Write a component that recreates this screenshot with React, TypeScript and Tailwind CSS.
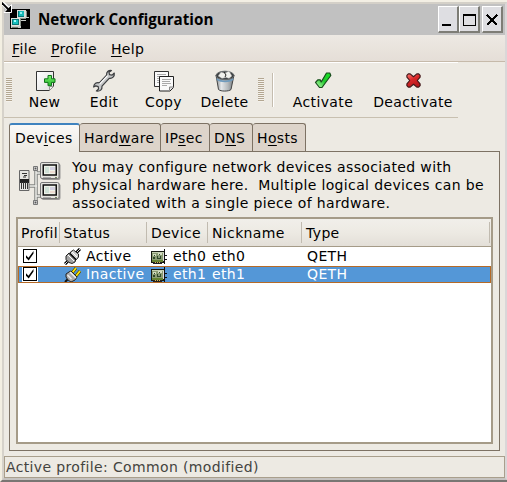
import React from "react";

function Title({ children }: { children: React.ReactNode }) {
  return <span className="font-['Open_Sans',sans-serif] text-[15.2px] font-bold leading-[31px] tracking-normal whitespace-pre">{children}</span>;
}

function U({ text, at }: { text: string; at: number }) {
  return (
    <span className="whitespace-pre">
      {text.slice(0, at)}
      <span className="underline decoration-1 underline-offset-2">{text[at]}</span>
      {text.slice(at + 1)}
    </span>
  );
}

function AppIcon() {
  return (
    <svg width="20" height="20" viewBox="0 0 20 20" shapeRendering="crispEdges">
      <rect width="20" height="20" fill="#000" />
      <path d="M7 1h9v8H7z" fill="#d8dcd8" />
      <path d="M8 2h6v6H8z" fill="#087878" />
      <path d="M9 2h5v5H9z" fill="#18b8b8" />
      <path d="M10 3h2v2h-2z" fill="#90f0f0" />
      <path d="M16 2h1v7h-1zM7 9h9v1H7z" fill="#889088" />
      <path d="M1 9h9v8H1z" fill="#e0e0dc" />
      <path d="M2 10h7v6H2z" fill="#087878" />
      <path d="M3 11h5v4H3z" fill="#18c0c0" />
      <path d="M4 11h2v2H4z" fill="#a0ffff" />
      <path d="M10 10h1v7h-1z" fill="#889088" />
      <path d="M1 17h10v2H1zM11 11h5v1h-5zM15 8h4v1h-4z" fill="#c8ccc8" />
      <path d="M2 18h6v1H2z" fill="#707870" />
    </svg>
  );
}

function NewIcon() {
  return (
    <svg width="22" height="22" viewBox="0 0 22 22">
      <defs>
        <linearGradient id="paper" x2="1" y2="1"><stop stopColor="#fff" /><stop offset="1" stopColor="#dedede" /></linearGradient>
        <linearGradient id="plus" x2="0" y2="1"><stop stopColor="#7cf06e" /><stop offset="1" stopColor="#22b52a" /></linearGradient>
      </defs>
      <path d="M2.500 1.500h17v15l-4 4h-13z" fill="url(#paper)" stroke="#333" />
      <path d="M15.500 20.500v-4h4" fill="#eee" stroke="#999" />
      <path d="M14 5.500h3.500v3.300H21v3.600h-3.500v3.300H14v-3.300h-3.500V8.800H14z" fill="url(#plus)" stroke="#10751b" strokeLinejoin="round" />
    </svg>
  );
}

function WrenchIcon() {
  return (
    <svg width="24" height="24" viewBox="0 0 24 24">
      <path d="M19.500 1.500c-3.300-.3-5.200 1.500-4.900 4.700L7.300 13.800c-2.800-.7-5.300.8-5.700 4.200l2.200-1.100 2.400.7.400 2.400-2.200 2c3.600.6 6-1.400 5.600-4.800l7.200-7.900c3.200.5 5.500-1.700 5.100-5.300l-2.200 2.200-2.600-.5-.5-2.400z" fill="#c6c8c9" stroke="#3c3e40" strokeWidth="1.200" strokeLinejoin="round" />
      <path d="M15.600 6.600L7.600 15.200" stroke="#fff" strokeWidth="1.200" />
    </svg>
  );
}

function CopyIcon() {
  return (
    <svg width="22" height="22" viewBox="0 0 22 22">
      <path d="M1.500 1.500h14v15h-14z" fill="#fafafa" stroke="#333" />
      <path d="M4 4.500h9M4 6.500h8M4 8.500h3M4 10.500h3M4 12.500h3" stroke="#aaa" />
      <path d="M6.500 6.500h14v11l-3.500 3.500H6.500z" fill="#fafafa" stroke="#222" />
      <path d="M9 9.500h9M9 11.500h8M9 13.500h9M9 15.500h5" stroke="#aaa" />
      <path d="M16.500 20.500v-3.500h4" fill="#ddd" stroke="#888" />
    </svg>
  );
}

function TrashIcon() {
  return (
    <svg width="22" height="23" viewBox="0 0 22 23">
      <defs><linearGradient id="bin"><stop stopColor="#858b8e" /><stop offset=".3" stopColor="#e3e6e8" /><stop offset=".65" stopColor="#b5babd" /><stop offset="1" stopColor="#73797c" /></linearGradient></defs>
      <path d="M2 6l2.500 14.500c2 2.100 10.500 2.100 12.500 0L20 6z" fill="url(#bin)" stroke="#444" />
      <path d="M2.500 9c4 3.200 13 3.200 17 0l-.3 2c-4 3-12.400 3-16.400 0z" fill="#6f9bbd" />
      <ellipse cx="11" cy="6.500" rx="9" ry="4.300" fill="#3b3f41" stroke="#666a6b" />
      <path d="M4 7l3-4 4 1 4-2 3 5-3 2.500-3-1-4 1z" fill="#f2f2ed" stroke="#888" strokeWidth=".5" />
      <path d="M10 3l2 3-1 2" stroke="#222" fill="none" />
    </svg>
  );
}

function CheckIcon() {
  return (
    <svg width="18" height="20" viewBox="0 0 18 20">
      <defs><linearGradient id="tick" x1="1" x2="0" y2="1"><stop stopColor="#18e424" /><stop offset=".5" stopColor="#20c92d" /><stop offset="1" stopColor="#c5ffb5" /></linearGradient></defs>
      <path d="M1.500 11.500l2.300-2.700h2.400l1 2.200L12.500 2h3.300l1 2.500L8 16.500H5.500z" fill="url(#tick)" stroke="#174b1b" strokeWidth="1.200" strokeLinejoin="round" />
    </svg>
  );
}

function CrossIcon() {
  return (
    <svg width="17" height="17" viewBox="0 0 18 18">
      <defs><linearGradient id="cross" x2=".5" y2="1"><stop stopColor="#ff7b74" /><stop offset=".5" stopColor="#d92728" /><stop offset="1" stopColor="#b6181b" /></linearGradient></defs>
      <path d="M5.500 2L9 5 12.500 2h2L16 3.500v2L13 9l3 3.500v2L14.500 16h-2L9 13 5.500 16h-2L2 14.500v-2L5 9 2 5.500v-2L3.500 2z" fill="url(#cross)" stroke="#3d1718" strokeWidth="1.200" strokeLinejoin="round" />
    </svg>
  );
}

function NetworkIcon() {
  return (
    <svg width="44" height="46" viewBox="0 0 44 46">
      <g stroke="#838583" strokeWidth="3.500" fill="none"><path d="M17 7v34M10 25h8M17 12h7M17 35h7" /></g>
      <g stroke="#eaeae6" strokeWidth="1.500" fill="none"><path d="M17 7v34M10 25h8M17 12h7M17 35h7" /></g>
      <path d="M14.500 5.500h4v4h-4zM14.500 39.500h4v4h-4z" fill="#eee" stroke="#777" />
      <path d="M15.500 6.500h2v2h-2zM15.500 40.500h2v2h-2z" fill="#555" />
      <path d="M.5 9.500h9.500v20H.5z" fill="#e6e6e3" stroke="#666" />
      <path d="M1 18h9v4H1z" fill="#222" />
      <path d="M3 12.500h5M5 14.500h3M4 16h3M2.500 21v7M4.500 21v7M6.500 21v7M8.500 21v7" stroke="#333" />
      {[1, 21].map((y) => (
        <g key={y} transform={`translate(0 ${y})`}>
          <rect x="22.500" y="1.500" width="19" height="16.500" rx="2" fill="#777" opacity=".7" />
          <rect x="21.500" y=".5" width="18.500" height="16" rx="1.500" fill="#e4e4e0" stroke="#777" />
          <rect x="24.250" y="3" width="13" height="10" fill="#edf1e8" stroke="#111" strokeWidth="1.500" />
          <path d="M26 5h4v6h-4z" fill="#cfe0d6" /><path d="M31 5h5v3h-5z" fill="#d2d1e0" /><path d="M31 9h5v2h-5z" fill="#ecdcd2" />
          <path d="M24 15.500h8" stroke="#aaa" /><path d="M36 15h2v1h-2z" fill="#72885f" />
        </g>
      ))}
    </svg>
  );
}

function Plug({ active }: { active: boolean }) {
  return (
    <svg width="17" height="17" viewBox="0 0 17 17">
      {active ? <>
        <path d="M1 16l4-4M12 5l4-4" stroke="#000" strokeWidth="3" />
        <path d="M1 16l4-4M12 5l4-4" stroke="#ddd" strokeWidth="1" />
        <path d="M2 8l3-3 2 1 5 5-1 3-3 1.500-3-1-3-3z" fill="#a4a4a4" stroke="#222" />
        <path d="M6.500 4l3-2 5 4v3l-2 2.500-6-6z" fill="#ccc" stroke="#222" />
        <path d="M4 7l6 6M8 4l5 5" stroke="#fff" />
        <path d="M5.500 5.500l6.500 6.500" stroke="#111" strokeWidth="1.300" />
      </> : <>
        <path d="M8 7l4-5M12 10l4-5" stroke="#514800" strokeWidth="3" />
        <path d="M8 7l4-5M12 10l4-5" stroke="#ffe400" strokeWidth="1.800" />
        <path d="M1 16l3-3" stroke="#111" strokeWidth="2" />
        <path d="M2 8l3-2 2-1 6 6-2 3-4 2-3-2-2-3z" fill="#aaa" stroke="#222" />
        <path d="M6 6l6 6M3.500 9l4 4" stroke="#eee" strokeWidth="1.400" />
      </>}
    </svg>
  );
}

function Card() {
  return (
    <svg width="17" height="16" viewBox="0 0 17 16" shapeRendering="crispEdges">
      <path d="M0 2h14v12H0z" fill="#171b12" />
      <path d="M1 3h12v9H1z" fill="#8a9c72" />
      <path d="M1 3h12v1H1z" fill="#c3cfb0" />
      <path d="M2 5h3v2H2zM7 4h4v2H7z" fill="#d3dcc2" />
      <path d="M3 6h1v1H3zM8 5h1v1H8zM2 8h2v2H2zM6 7h4v3H6z" fill="#2f472a" />
      <path d="M7 7h2v2H7z" fill="#899b7a" />
      <path d="M1 11h11v2H1z" fill="#648332" />
      <path d="M2 13h9v2H2z" fill="#222" /><path d="M4 13h1v1H4zM6 13h1v1H6zM8 13h1v1H8z" fill="#d9b952" />
      <path d="M13 0h1v15h-1zM14 6h2v1h-2zM14 10h2v1h-2z" fill="#111" />
      <path d="M12 4h1v8h-1z" fill="#ddd" />
    </svg>
  );
}

function CheckBox() {
  return (
    <svg width="16" height="15" viewBox="0 0 16 15">
      <path d="M0 0h16v15H0z" fill="#fff" />
      <rect x="1.500" y=".5" width="13" height="13" fill="#fff" stroke="#000" />
      <path d="M4 6.200v2.600l2.700 2.700L11.500 4.500V2L6.500 8.700z" fill="#000" />
    </svg>
  );
}

function Grip() {
  return <div className="mt-[15px] h-[24px] w-[6px] shrink-0 bg-[repeating-linear-gradient(to_bottom,#b3a792_0px,#b3a792_1px,#f5f2ec_1px,#f5f2ec_2px)]" />;
}

function Tool({ label, icon, box, pad }: { label: string; icon: React.ReactNode; box: string; pad: string }) {
  return (
    <div className={`flex shrink-0 flex-col items-center ${box}`}>
      <div className={`flex h-[30px] items-start ${pad}`}>{icon}</div>
      <span className="leading-[18px]">{label}</span>
    </div>
  );
}

function WinButton({ kind }: { kind: "min" | "max" | "close" }) {
  return (
    <div className="h-[27px] w-[21px] border-t border-l border-r-2 border-b-2 border-t-white border-l-white border-r-[#7d7d76] border-b-[#7d7d76] bg-[#dedee2]">
      <svg width="18" height="24" viewBox="0 0 18 24" shapeRendering="crispEdges">
        {kind === "min" && <path d="M3 17h9v2H3z" />}
        {kind === "max" && <path d="M3 7h13v12H3zM4 9v9h11V9z" fillRule="evenodd" />}
        {kind === "close" && <path d="M4 8l10 10M14 8L4 18" stroke="#000" strokeWidth="2.300" />}
      </svg>
    </div>
  );
}

const tabs = [
  { name: "Hardware", at: 4, size: "w-[81px] pl-[4px]" },
  { name: "IPsec", at: 2, size: "w-[49px] pl-[4px]" },
  { name: "DNS", at: 1, size: "w-[43px] pl-[4px]" },
  { name: "Hosts", at: 1, size: "w-[53px] pl-[4px]" },
];

const headers = [
  { name: "Profil", size: "w-[42px] pl-[3px]" },
  { name: "Status", size: "w-[87px] pl-[3.5px]" },
  { name: "Device", size: "w-[61px] pl-[4px]" },
  { name: "Nickname", size: "w-[94px] pl-[4px]" },
  { name: "Type", size: "w-[188px] pl-[4px]" },
];

function DeviceRow({ active, name }: { active: boolean; name: string }) {
  return (
    <div className={`flex items-center leading-[17px] ${active ? "h-[19px]" : "h-[17px] bg-[#5497d7] text-white outline-1 -outline-offset-1 outline-[#b66a26]"}`}>
      <div className="w-[46px] shrink-0 pl-[4px]"><CheckBox /></div>
      <div className="flex w-[87px] shrink-0 items-center gap-[5px]"><Plug active={active} />{active ? "Active" : "Inactive"}</div>
      <div className="flex w-[61px] shrink-0 items-center gap-[5px]"><Card />{name}</div>
      <div className="w-[95px] shrink-0">{name}</div>
      <div>QETH</div>
    </div>
  );
}

export default function App() {
  return (
    <div className="relative h-[482px] w-[507px] overflow-hidden border-t-2 border-b-2 border-l-2 border-t-[#f3efe4] border-b-[#797673] border-l-[#f3efe2] bg-[#edeae3] font-['DejaVu_Sans',sans-serif] text-[14px] tracking-[0.36px] text-black">
      <div className="flex h-[478px] flex-col border-t-2 border-r-2 border-b-2 border-l-2 border-t-[#d4d0c8] border-r-[#dad7d8] border-b-[#c6c3c0] border-l-[#d6d2ca]">
        <header className="flex h-[31px] shrink-0 bg-[#c1c1c1]">
          <div className="w-[34px] shrink-0 pt-[5px] pl-[6px]"><AppIcon /></div>
          <Title>Network Configuration</Title>
          <div className="ml-auto flex pt-[2px] pr-[2px]">
            <WinButton kind="min" /><WinButton kind="max" />
            <div className="ml-[2px]"><WinButton kind="close" /></div>
          </div>
        </header>
        <nav className="flex h-[27px] shrink-0 gap-[14px] border-b border-[#c6baaa] bg-linear-to-b from-[#ede9e3] to-[#e5ded7] pl-[8px] leading-[28px]">
          <U text="File" at={0} /><U text="Profile" at={0} /><U text="Help" at={0} />
        </nav>
        <div className="flex h-[56px] w-[454px] shrink-0 border-t border-b border-t-white border-b-[#c8c0b0] pl-[2px]">
          <Grip />
          <Tool label="New" icon={<NewIcon />} box="w-[62px] pl-[3px]" pad="pt-[7px]" />
          <Tool label="Edit" icon={<WrenchIcon />} box="w-[60px]" pad="pt-[6px]" />
          <Tool label="Copy" icon={<CopyIcon />} box="w-[59px]" pad="pt-[7px]" />
          <Tool label="Delete" icon={<TrashIcon />} box="w-[63px]" pad="pt-[6px]" />
          <div className="w-[2px] shrink-0" /><Grip />
          <div className="mt-[10px] ml-[8px] h-[34px] w-[2px] shrink-0 border-r border-l border-l-[#c5bdaf] border-r-white" />
          <Tool label="Activate" icon={<CheckIcon />} box="ml-[11px] w-[76px]" pad="pt-[8px]" />
          <Tool label="Deactivate" icon={<CrossIcon />} box="ml-[4px] w-[96px]" pad="pt-[9px]" />
        </div>
        <main className="mt-[5px] ml-[5px] h-[328px] w-[491px] shrink-0">
          <div className="flex h-[28px]">
            <div className="h-[29px] w-[71px] shrink-0 rounded-t-[3px] border-t-2 border-r border-l border-t-[#3f83bf] border-r-[#7d7264] border-l-[#7d7264] bg-linear-to-b from-[#faf9f7] to-[#edeae3] pl-[5px] leading-[27px]"><U text="Devices" at={3} /></div>
            {tabs.map((t) => (
              <div key={t.name} className={`h-[28px] shrink-0 rounded-t-[3px] border-t border-r border-[#7d7264] bg-[#ddd4ca] leading-[29px] ${t.size}`}><U text={t.name} at={t.at} /></div>
            ))}
          </div>
          <section className="h-[300px] border-r border-b border-l border-[#7d7264] px-[6px]">
            <div className="-mr-[7px] ml-[64px] h-px bg-[#7d7264]" />
            <div className="flex h-[65px]">
              <div className="w-[56px] shrink-0 pt-[9px] pl-[3px]"><NetworkIcon /></div>
              <p className="pt-[6px] leading-[18px] whitespace-pre">{"You may configure network devices associated with\nphysical hardware here.  Multiple logical devices can be\nassociated with a single piece of hardware."}</p>
            </div>
            <div className="h-[227px] w-[477px] border-2 border-[#a59b88] bg-white">
              <div className="flex h-[28px] border-b border-[#a59b88] bg-linear-to-b from-[#f1efea] via-[#edeae3] to-[#e3dfd8] pt-[3px] leading-[23px]">
                {headers.map((h) => <div key={h.name} className={`h-[21px] shrink-0 overflow-hidden border-r border-[#c1bbb0] whitespace-nowrap ${h.size}`}>{h.name}</div>)}
              </div>
              <DeviceRow active name="eth0" />
              <DeviceRow active={false} name="eth1" />
            </div>
          </section>
        </main>
        <footer className="mt-[5px] h-[22px] w-[501px] shrink-0 border border-[#a99f8c] pl-px leading-[21px] text-[#44443f]">Active profile: Common (modified)</footer>
      </div>
      <svg className="absolute -top-[2px] -left-[2px]" width="13" height="14" viewBox="0 0 13 14">
        <path d="M0 .5L9 9.500" stroke="#fff" strokeWidth="4" />
        <path d="M4 12.500h7.500V4.500z" fill="#000" stroke="#fff" />
        <path d="M0 1L9 10" stroke="#000" strokeWidth="1.800" />
      </svg>
    </div>
  );
}
